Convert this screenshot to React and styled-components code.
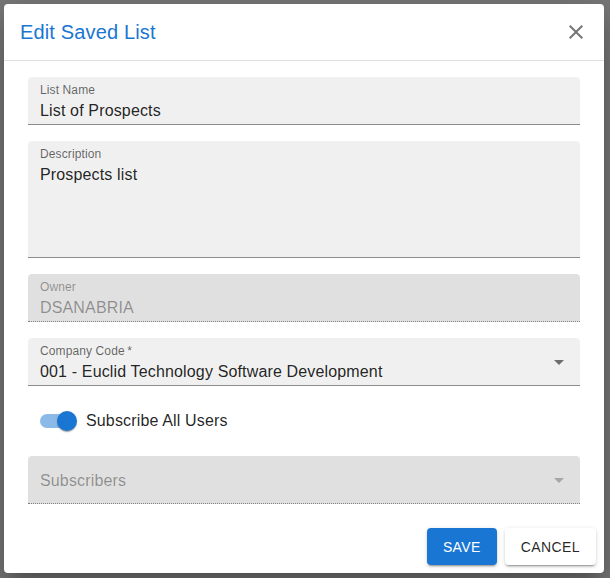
import React from 'react';
import styled, { createGlobalStyle } from 'styled-components';

const GlobalStyle = createGlobalStyle`
  html, body {
    margin: 0;
    padding: 0;
  }
  body {
    font-family: "Liberation Sans", Arial, Helvetica, sans-serif;
  }
`;

const Backdrop = styled.div`
  width: 610px;
  height: 578px;
  box-sizing: border-box;
  padding: 4px 6px 5px 4px;
  background: #787878;
  overflow: hidden;
`;

const Dialog = styled.div`
  width: 600px;
  background: #fff;
  border-radius: 4px;
  box-shadow: 0 11px 15px -7px rgba(0,0,0,0.2), 0 24px 38px 3px rgba(0,0,0,0.14), 0 9px 46px 8px rgba(0,0,0,0.12);
  display: flex;
  flex-direction: column;
`;

const Header = styled.div`
  height: 56px;
  display: flex;
  align-items: center;
  justify-content: space-between;
  padding: 0 8px 0 16px;
  border-bottom: 1px solid rgba(0,0,0,0.12);
`;

const Title = styled.h2`
  margin: 0;
  font-size: 20px;
  font-weight: 400;
  color: #1976d2;
  letter-spacing: 0.0075em;
`;

const CloseButton = styled.button`
  width: 40px;
  height: 40px;
  border: 0;
  background: transparent;
  padding: 8px;
  display: flex;
  align-items: center;
  justify-content: center;
  color: rgba(0,0,0,0.54);
  cursor: pointer;
`;

const Content = styled.div`
  padding: 16px 24px;
  display: flex;
  flex-direction: column;
  gap: 16px;
`;

const Field = styled.div`
  position: relative;
  box-sizing: border-box;
  height: ${(p) => (p.$multiline ? '117px' : '48px')};
  padding: 5px 12px 4px;
  border-radius: 4px 4px 0 0;
  background: ${(p) => (p.$disabled ? 'rgba(0,0,0,0.12)' : 'rgba(0,0,0,0.06)')};
  border-bottom: 1px ${(p) => (p.$disabled ? 'dotted' : 'solid')} rgba(0,0,0,0.42);
  display: flex;
  flex-direction: column;
`;

const Label = styled.label`
  font-size: 12px;
  line-height: 17px;
  color: ${(p) => (p.$disabled ? 'rgba(0,0,0,0.38)' : 'rgba(0,0,0,0.6)')};
  letter-spacing: 0.00938em;
`;

const Value = styled.div`
  font-size: 16px;
  line-height: 23px;
  color: ${(p) => (p.$disabled ? 'rgba(0,0,0,0.38)' : 'rgba(0,0,0,0.87)')};
  letter-spacing: 0.00938em;
  white-space: pre-wrap;
`;

const Placeholder = styled.div`
  font-size: 16px;
  line-height: 23px;
  margin-top: 8px;
  color: rgba(0,0,0,0.38);
  letter-spacing: 0.00938em;
`;

const Arrow = styled.svg`
  position: absolute;
  right: 9px;
  top: 50%;
  margin-top: -12px;
  width: 24px;
  height: 24px;
  fill: ${(p) => (p.$disabled ? 'rgba(0,0,0,0.26)' : 'rgba(0,0,0,0.54)')};
`;

const SwitchRow = styled.label`
  height: 38px;
  margin: 0;
  display: flex;
  align-items: center;
  font-size: 16px;
  color: rgba(0,0,0,0.87);
  letter-spacing: 0.00938em;
`;

const SwitchRoot = styled.span`
  position: relative;
  width: 58px;
  height: 38px;
  box-sizing: border-box;
  padding: 12px;
  flex-shrink: 0;
`;

const Track = styled.span`
  display: block;
  width: 34px;
  height: 14px;
  border-radius: 7px;
  background: ${(p) => (p.$on ? '#1976d2' : '#000')};
  opacity: ${(p) => (p.$on ? 0.5 : 0.38)};
`;

const Thumb = styled.span`
  position: absolute;
  top: 9px;
  left: ${(p) => (p.$on ? '29px' : '9px')};
  width: 20px;
  height: 20px;
  border-radius: 50%;
  background: ${(p) => (p.$on ? '#1976d2' : '#fff')};
  box-shadow: 0 2px 1px -1px rgba(0,0,0,0.2), 0 1px 1px 0 rgba(0,0,0,0.14), 0 1px 3px 0 rgba(0,0,0,0.12);
`;

const Actions = styled.div`
  padding: 8px;
  display: flex;
  justify-content: flex-end;
  gap: 8px;
`;

const Button = styled.button`
  height: 37px;
  padding: 6px 16px;
  border: 0;
  border-radius: 4px;
  font-family: inherit;
  font-size: 14px;
  font-weight: 400;
  letter-spacing: 0.02857em;
  text-transform: uppercase;
  background: ${(p) => (p.$primary ? '#1976d2' : '#fff')};
  color: ${(p) => (p.$primary ? '#fff' : 'rgba(0,0,0,0.87)')};
  box-shadow: 0 3px 1px -2px rgba(0,0,0,0.2), 0 2px 2px 0 rgba(0,0,0,0.14), 0 1px 5px 0 rgba(0,0,0,0.12);
  cursor: pointer;
`;

function DropArrow({ disabled }) {
  return (
    <Arrow $disabled={disabled} viewBox="0 0 24 24">
      <path d="M7 10l5 5 5-5z" />
    </Arrow>
  );
}

function TextField({ label, value, disabled, multiline, select }) {
  return (
    <Field $disabled={disabled} $multiline={multiline}>
      <Label $disabled={disabled}>{label}</Label>
      <Value $disabled={disabled}>{value}</Value>
      {select && <DropArrow disabled={disabled} />}
    </Field>
  );
}

function EmptySelect({ label, disabled }) {
  return (
    <Field $disabled={disabled}>
      <Placeholder>{label}</Placeholder>
      <DropArrow disabled={disabled} />
    </Field>
  );
}

export default function App() {
  const subscribeAll = true;

  return (
    <>
      <GlobalStyle />
      <Backdrop>
        <Dialog>
          <Header>
            <Title>Edit Saved List</Title>
            <CloseButton aria-label="close">
              <svg width="24" height="24" viewBox="0 0 24 24" fill="currentColor">
                <path d="M19 6.41 17.59 5 12 10.59 6.41 5 5 6.41 10.59 12 5 17.59 6.41 19 12 13.41 17.59 19 19 17.59 13.41 12z" />
              </svg>
            </CloseButton>
          </Header>

          <Content>
            <TextField label="List Name" value="List of Prospects" />
            <TextField label="Description" value="Prospects list" multiline />
            <TextField label="Owner" value="DSANABRIA" disabled />
            <TextField
              label={'Company Code\u2009*'}
              value="001 - Euclid Technology Software Development"
              select
            />
            <SwitchRow>
              <SwitchRoot>
                <Track $on={subscribeAll} />
                <Thumb $on={subscribeAll} />
              </SwitchRoot>
              Subscribe All Users
            </SwitchRow>
            <EmptySelect label="Subscribers" disabled />
          </Content>

          <Actions>
            <Button $primary>Save</Button>
            <Button>Cancel</Button>
          </Actions>
        </Dialog>
      </Backdrop>
    </>
  );
}
